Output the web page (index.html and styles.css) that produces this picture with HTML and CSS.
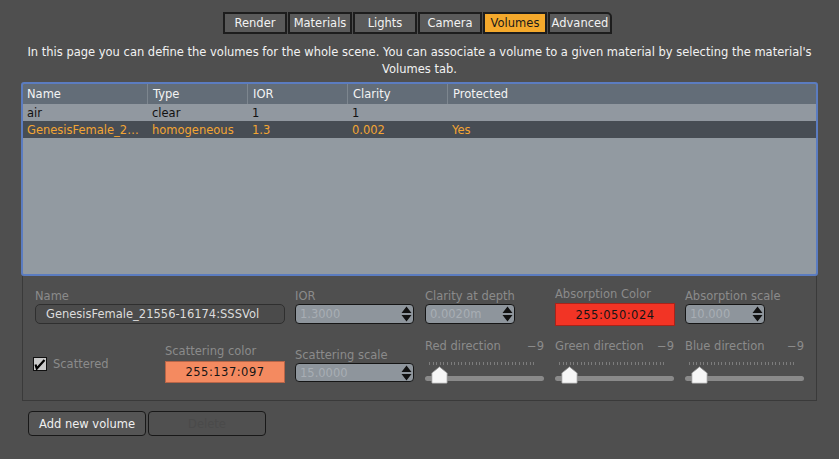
FILE: index.html
```html
<!DOCTYPE html>
<html>
<head>
<meta charset="utf-8">
<link rel="stylesheet" href="styles.css">
</head>
<body>
<div class="page">
  <div class="tabs">
    <div class="tab">Render</div>
    <div class="tab">Materials</div>
    <div class="tab">Lights</div>
    <div class="tab">Camera</div>
    <div class="tab active">Volumes</div>
    <div class="tab last">Advanced</div>
  </div>
  <p class="desc">In this page you can define the volumes for the whole scene. You can associate a volume to a given material by selecting the material's<br>Volumes tab.</p>
  <div class="table">
    <div class="row head">
      <div class="c c1">Name</div><div class="c">Type</div><div class="c">IOR</div><div class="c">Clarity</div><div class="c last">Protected</div>
    </div>
    <div class="row">
      <div class="c c1">air</div><div class="c">clear</div><div class="c">1</div><div class="c">1</div><div class="c last"></div>
    </div>
    <div class="row sel">
      <div class="c c1">GenesisFemale_2…</div><div class="c">homogeneous</div><div class="c">1.3</div><div class="c">0.002</div><div class="c last">Yes</div>
    </div>
  </div>
  <div class="group">
    <div class="form">
      <div class="field span2">
        <div class="lbl">Name</div>
        <div class="text-input">GenesisFemale_21556-16174:SSSVol</div>
      </div>
      <div class="field">
        <div class="lbl">IOR</div>
        <div class="spin w118"><span>1.3000</span><svg class="arrows" width="11" height="16" viewBox="0 0 11 16"><path d="M5.5 0.5 L10.5 7 L0.5 7 Z M0.5 9 L10.5 9 L5.5 15.5 Z" fill="#111"/></svg></div>
      </div>
      <div class="field">
        <div class="lbl">Clarity at depth</div>
        <div class="spin w90"><span>0.0020m</span><svg class="arrows" width="11" height="16" viewBox="0 0 11 16"><path d="M5.5 0.5 L10.5 7 L0.5 7 Z M0.5 9 L10.5 9 L5.5 15.5 Z" fill="#111"/></svg></div>
      </div>
      <div class="field up">
        <div class="lbl">Absorption Color</div>
        <div class="colorbox absorb">255:050:024</div>
      </div>
      <div class="field">
        <div class="lbl">Absorption scale</div>
        <div class="spin w79"><span>10.000</span><svg class="arrows" width="11" height="16" viewBox="0 0 11 16"><path d="M5.5 0.5 L10.5 7 L0.5 7 Z M0.5 9 L10.5 9 L5.5 15.5 Z" fill="#111"/></svg></div>
      </div>

      <div class="check-cell">
        <svg class="checkbox" width="14" height="14" viewBox="0 0 14 14"><rect x="0.5" y="0.5" width="13" height="13" fill="#c9c9c9" stroke="#111"/><path d="M2.5 7.5 L3.8 11.5 L11.5 3" fill="none" stroke="#000" stroke-width="2.2"/><path d="M2.5 8.5 L5 11.5 L3 11.5 Z" fill="#000"/></svg>
        <span class="lbl inline">Scattered</span>
      </div>
      <div class="field scat-color">
        <div class="lbl">Scattering color</div>
        <div class="colorbox scatter">255:137:097</div>
      </div>
      <div class="field scat-scale">
        <div class="lbl">Scattering scale</div>
        <div class="spin w118"><span>15.0000</span><svg class="arrows" width="11" height="16" viewBox="0 0 11 16"><path d="M5.5 0.5 L10.5 7 L0.5 7 Z M0.5 9 L10.5 9 L5.5 15.5 Z" fill="#111"/></svg></div>
      </div>
      <div class="slider">
        <div class="slider-head"><span>Red direction</span><span>−9</span></div>
        <div class="ticks"></div>
        <div class="track"><svg class="thumb" width="17" height="18" viewBox="0 0 17 18"><path d="M8.5 0.8 L16.2 7 L16.2 16.5 Q16.2 17.3 15.4 17.3 L1.6 17.3 Q0.8 17.3 0.8 16.5 L0.8 7 Z" fill="#f6f6f6" stroke="#8c8c8c" stroke-width="0.8"/></svg></div>
      </div>
      <div class="slider">
        <div class="slider-head"><span>Green direction</span><span>−9</span></div>
        <div class="ticks"></div>
        <div class="track"><svg class="thumb" width="17" height="18" viewBox="0 0 17 18"><path d="M8.5 0.8 L16.2 7 L16.2 16.5 Q16.2 17.3 15.4 17.3 L1.6 17.3 Q0.8 17.3 0.8 16.5 L0.8 7 Z" fill="#f6f6f6" stroke="#8c8c8c" stroke-width="0.8"/></svg></div>
      </div>
      <div class="slider">
        <div class="slider-head"><span>Blue direction</span><span>−9</span></div>
        <div class="ticks"></div>
        <div class="track"><svg class="thumb" width="17" height="18" viewBox="0 0 17 18"><path d="M8.5 0.8 L16.2 7 L16.2 16.5 Q16.2 17.3 15.4 17.3 L1.6 17.3 Q0.8 17.3 0.8 16.5 L0.8 7 Z" fill="#f6f6f6" stroke="#8c8c8c" stroke-width="0.8"/></svg></div>
      </div>
    </div>
  </div>
  <div class="buttons">
    <div class="btn">Add new volume</div>
    <div class="btn disabled">Delete</div>
  </div>
</div>
</body>
</html>
```

FILE: styles.css
```css
* { box-sizing: border-box; }
html, body { margin: 0; padding: 0; }
body {
  width: 839px;
  height: 459px;
  overflow: hidden;
  background: #4f4f4f;
  font-family: "DejaVu Sans", Verdana, sans-serif;
  font-size: 11.5px;
  color: #f0f0f0;
}
.page { display: flex; flex-direction: column; width: 839px; height: 459px; }

.tabs {
  display: flex;
  gap: 1px;
  padding-top: 12px;
  padding-left: 223px;
}
.tab {
  width: 64px;
  height: 22px;
  border: 2px solid #1d1d1d;
  background: #5a5a5a;
  color: #f2f2f2;
  display: flex;
  align-items: center;
  justify-content: center;
  font-size: 11.5px;
}
.tab.active { background: #f4a92c; color: #1a1a1a; }
.tab.last { border-top-right-radius: 5px; }

.desc {
  margin: 10px 0 0 0;
  text-align: center;
  line-height: 17px;
  font-size: 11.5px;
  color: #f2f2f2;
}

.table {
  margin: 4px 21px 0 21px;
  height: 194px;
  border: 2px solid #5b7cc0;
  border-radius: 3px;
  background: #929aa1;
  overflow: hidden;
}
.row {
  display: flex;
  height: 17px;
  align-items: center;
  background: #9198a0;
  color: #111;
}
.row.head { height: 20px; background: #636d78; color: #f4f4f4; }
.row.sel { height: 17px; background: #474d54; color: #f3a533; }
.c {
  width: 100px;
  height: 100%;
  padding-left: 5px;
  display: flex;
  align-items: center;
  white-space: nowrap;
  overflow: hidden;
}
.c1 { width: 124px; padding-left: 4px; }
.c.last { flex: 1; }
.row.head .c + .c { border-left: 1px solid #7d868f; }
.row.head .c { height: 100%; }

.group {
  margin: 0 22px;
  height: 125px;
  border: 1px solid #3a3a3a;
  border-top: none;
}
.form {
  display: grid;
  grid-template-columns: repeat(6, 119px);
  grid-template-rows: 49px 52px;
  column-gap: 11px;
  padding: 14px 0 0 12px;
  align-items: start;
}
.field { display: flex; flex-direction: column; gap: 1px; }
.field.span2 { grid-column: span 2; }
.field.up { margin-top: -2px; gap: 2px; }
.lbl { color: #8b8b8b; line-height: 13px; font-size: 11.5px; white-space: nowrap; }
.lbl.inline { line-height: 14px; }

.text-input {
  width: 250px;
  height: 20px;
  border: 1px solid #2f2f2f;
  border-radius: 5px;
  background: #4b4b4b;
  color: #dcdcdc;
  display: flex;
  align-items: center;
  padding-left: 10px;
  font-size: 11.5px;
}
.spin {
  height: 20px;
  border: 1px solid #151515;
  border-radius: 4px;
  background: #8e959c;
  color: #a8aeb4;
  display: flex;
  align-items: center;
  justify-content: space-between;
  padding: 0 1px 0 4px;
  font-size: 11.5px;
}
.w118 { width: 119px; }
.w90 { width: 90px; }
.w79 { width: 80px; }
.arrows { display: block; }

.colorbox {
  width: 120px;
  height: 23px;
  display: flex;
  align-items: center;
  justify-content: center;
  color: #151515;
  font-size: 11.5px;
  letter-spacing: 0.5px;
}
.colorbox.absorb { background: #f23425; border: 1px solid #a8231a; }
.colorbox.scatter { background: #f48a60; border: 1px solid #b86548; height: 22px; }

.check-cell {
  display: flex;
  align-items: center;
  gap: 6px;
  margin-top: 18px;
  margin-left: -2px;
}
.checkbox { display: block; }
.scat-color { margin-top: 6px; gap: 3px; }
.scat-scale { margin-top: 10px; gap: 1px; }
.scat-scale .spin { height: 19px; }

.slider { width: 119px; margin-top: 1px; }
.slider-head {
  display: flex;
  justify-content: space-between;
  color: #8b8b8b;
  line-height: 13px;
  font-size: 11.5px;
}
.ticks {
  margin: 9px 8px 0 4px;
  height: 3px;
  background: repeating-linear-gradient(to right, #7c7c7c 0, #7c7c7c 1px, transparent 1px, transparent 3.6px);
}
.track {
  position: relative;
  margin-top: 11px;
  height: 5px;
  border-radius: 3px;
  background: #8a8a8a;
}
.thumb { position: absolute; left: 6px; top: -10px; }

.buttons {
  display: flex;
  gap: 2px;
  padding: 10px 0 0 28px;
}
.btn {
  width: 118px;
  height: 25px;
  border: 1px solid #181818;
  border-radius: 4px;
  background: #555555;
  color: #f0f0f0;
  display: flex;
  align-items: center;
  justify-content: center;
  font-size: 11.5px;
}
.btn.disabled { color: #4a4a4a; background: #505050; }
```
